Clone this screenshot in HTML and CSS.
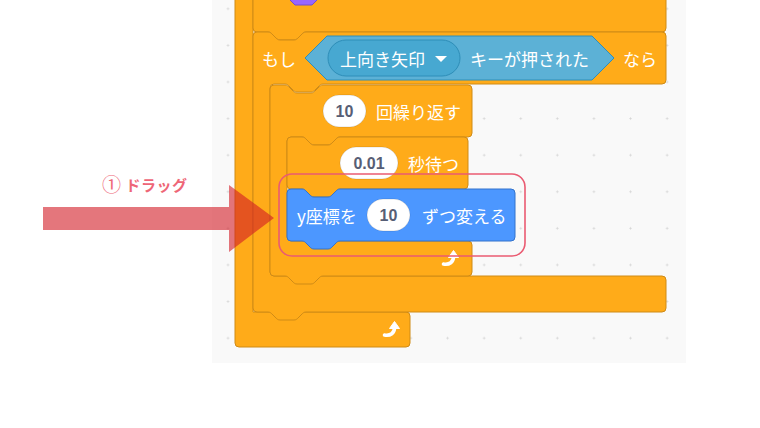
FILE: index.html
```html
<!DOCTYPE html>
<html lang="ja">
<head>
<meta charset="UTF-8" />
<meta name="viewport" content="width=device-width, initial-scale=1" />
<title>ドラッグ</title>
<link rel="stylesheet" href="styles.css">
</head>
<body>

<div class="stage">
  <div class="workspace">
    <svg class="blocks" width="474" height="363" viewBox="212 0 474 363">
      <!-- ずっと (外側) -->
      <path class="control" d="M235 -20 H253 V312 H406 a4 4 0 0 1 4 4 V343 a4 4 0 0 1 -4 4 H239 a4 4 0 0 1 -4 -4 Z" />

      <!-- 上のブロック -->
      <path class="control" d="M253 -20 H666 V28 a4 4 0 0 1 -4 4 H306 c-2 0 -3 1 -4 2 l-4 4 c-1 1 -2 2 -4 2 h-14 c-2 0 -3 -1 -4 -2 l-4 -4 c-1 -1 -2 -2 -4 -2 H257 a4 4 0 0 1 -4 -4 Z" />
      <polygon class="looks" points="273,-17 295,-39 312,-39 334,-17 312,5 295,5" />

      <!-- もし ... なら -->
      <path class="control" d="M253 36 a4 4 0 0 1 4 -4 H268 c2 0 3 1 4 2 l4 4 c1 1 2 2 4 2 h14 c2 0 3 -1 4 -2 l4 -4 c1 -1 2 -2 4 -2 H662 a4 4 0 0 1 4 4 V80 a4 4 0 0 1 -4 4 H323 c-2 0 -3 1 -4 2 l-4 4 c-1 1 -2 2 -4 2 h-14 c-2 0 -3 -1 -4 -2 l-4 -4 c-1 -1 -2 -2 -4 -2 H274 a4 4 0 0 0 -4 4 V272 a4 4 0 0 0 4 4 H662 a4 4 0 0 1 4 4 V308 a4 4 0 0 1 -4 4 H306 c-2 0 -3 1 -4 2 l-4 4 c-1 1 -2 2 -4 2 h-14 c-2 0 -3 -1 -4 -2 l-4 -4 c-1 -1 -2 -2 -4 -2 H257 a4 4 0 0 1 -4 -4 Z" />
      <text class="label" x="262" y="58">もし</text>
      <polygon class="sensing" points="305,58 327,36 592,36 614,58 592,80 327,80" />
      <rect class="sensing-menu" x="328" y="40" width="132" height="36" rx="18" />
      <text class="label" x="340" y="58">上向き矢印</text>
      <polygon class="caret" points="435,56 447,56 441,62" />
      <text class="label" x="470" y="58">キーが押された</text>
      <text class="label" x="623" y="58">なら</text>

      <!-- 10 回繰り返す -->
      <path class="control" d="M270 89 a4 4 0 0 1 4 -4 H285 c2 0 3 1 4 2 l4 4 c1 1 2 2 4 2 h14 c2 0 3 -1 4 -2 l4 -4 c1 -1 2 -2 4 -2 H468 a4 4 0 0 1 4 4 V133 a4 4 0 0 1 -4 4 H340 c-2 0 -3 1 -4 2 l-4 4 c-1 1 -2 2 -4 2 h-14 c-2 0 -3 -1 -4 -2 l-4 -4 c-1 -1 -2 -2 -4 -2 H291 a4 4 0 0 0 -4 4 V237 a4 4 0 0 0 4 4 H468 a4 4 0 0 1 4 4 V272 a4 4 0 0 1 -4 4 H323 c-2 0 -3 1 -4 2 l-4 4 c-1 1 -2 2 -4 2 h-14 c-2 0 -3 -1 -4 -2 l-4 -4 c-1 -1 -2 -2 -4 -2 H274 a4 4 0 0 1 -4 -4 Z" />
      <rect class="field" x="323" y="95" width="43" height="32" rx="16" />
      <text class="num" x="344.5" y="111">10</text>
      <text class="label" x="376" y="111">回繰り返す</text>

      <!-- 0.01 秒待つ -->
      <path class="control" d="M287 141 a4 4 0 0 1 4 -4 H302 c2 0 3 1 4 2 l4 4 c1 1 2 2 4 2 h14 c2 0 3 -1 4 -2 l4 -4 c1 -1 2 -2 4 -2 H464 a4 4 0 0 1 4 4 V185 a4 4 0 0 1 -4 4 H340 c-2 0 -3 1 -4 2 l-4 4 c-1 1 -2 2 -4 2 h-14 c-2 0 -3 -1 -4 -2 l-4 -4 c-1 -1 -2 -2 -4 -2 H291 a4 4 0 0 1 -4 -4 Z" />
      <rect class="field" x="340" y="147" width="58" height="32" rx="16" />
      <text class="num" x="369" y="163">0.01</text>
      <text class="label" x="408" y="163">秒待つ</text>

      <!-- y座標を 10 ずつ変える -->
      <path class="motion" d="M287 193 a4 4 0 0 1 4 -4 H302 c2 0 3 1 4 2 l4 4 c1 1 2 2 4 2 h14 c2 0 3 -1 4 -2 l4 -4 c1 -1 2 -2 4 -2 H511 a4 4 0 0 1 4 4 V237 a4 4 0 0 1 -4 4 H340 c-2 0 -3 1 -4 2 l-4 4 c-1 1 -2 2 -4 2 h-14 c-2 0 -3 -1 -4 -2 l-4 -4 c-1 -1 -2 -2 -4 -2 H291 a4 4 0 0 1 -4 -4 Z" />
      <text class="label" x="297" y="215">y座標を</text>
      <rect class="field" x="367" y="199" width="43" height="32" rx="16" />
      <text class="num" x="388.5" y="215">10</text>
      <text class="label" x="422" y="215">ずつ変える</text>

      <!-- 繰り返しの矢印 -->
      <g transform="translate(441 249)">
        <path class="loop-line" d="M2.5 15 C8.5 16 12.5 13 12.5 7.5" />
        <path class="loop-head" d="M7.5 8.5 L12.5 1.5 L17.5 8.5 Z" />
      </g>
      <g transform="translate(382 320)">
        <path class="loop-line" d="M2.5 15 C8.5 16 12.5 13 12.5 7.5" />
        <path class="loop-head" d="M7.5 8.5 L12.5 1.5 L17.5 8.5 Z" />
      </g>

      <rect class="highlight" x="279" y="174" width="246" height="82" rx="13" />
    </svg>
  </div>

  <div class="note"><span class="note-num">①</span> ドラッグ</div>
  <svg class="drag-arrow" width="280" height="260" viewBox="0 0 280 260">
    <path d="M43 207 H229 V185 L274 218 L229 252 V230 H43 Z" />
  </svg>
</div>

</body>
</html>
```

FILE: styles.css
```css
body {
  margin: 0;
  background: #fff;
  font-family: "Noto Sans CJK JP", "Noto Sans", sans-serif;
}
.stage {
  position: relative;
  width: 760px;
  height: 428px;
  overflow: hidden;
}
.workspace {
  margin-left: 212px;
  width: 474px;
  height: 363px;
  background-color: #f9f9f9;
  background-image: radial-gradient(circle, #d6d6d6 0.8px, transparent 1.3px);
  background-size: 36.6px 36.6px;
  background-position: -2.3px -9.5px;
}
.blocks {
  display: block;
  overflow: hidden;
}
.control {
  fill: #ffab19;
  stroke: #cf8b17;
  stroke-width: 1;
}
.motion {
  fill: #4c97ff;
  stroke: #3373cc;
  stroke-width: 1;
}
.looks {
  fill: #9966ff;
  stroke: #774dcb;
}
.sensing {
  fill: #5cb1d6;
  stroke: #2e8eb8;
}
.sensing-menu {
  fill: #47a8d1;
  stroke: #2e8eb8;
}
.caret {
  fill: #fff;
}
.label {
  font-family: "Noto Sans CJK JP", sans-serif;
  font-size: 17px;
  fill: #fff;
  dominant-baseline: central;
}
.field {
  fill: #fff;
  stroke: rgba(0,0,0,0.12);
}
.num {
  font-family: "Liberation Sans", Arial, sans-serif;
  font-weight: bold;
  font-size: 16px;
  fill: #575e75;
  text-anchor: middle;
  dominant-baseline: central;
}
.loop-line {
  fill: none;
  stroke: #fff;
  stroke-width: 3.6;
  stroke-linecap: round;
}
.loop-head {
  fill: #fff;
  stroke: #fff;
  stroke-linejoin: round;
}
.highlight {
  fill: none;
  stroke: #ea5b72;
  stroke-width: 1.6;
}
.note {
  position: absolute;
  left: 102px;
  top: 174px;
  font-size: 15px;
  font-weight: bold;
  color: #ee6677;
  line-height: 20px;
  letter-spacing: 0.5px;
}
.note-num {
  font-weight: normal;
  font-size: 19px;
  vertical-align: -1px;
}
.drag-arrow {
  position: absolute;
  left: 0;
  top: 0;
}
.drag-arrow path {
  fill: rgba(210, 27, 37, 0.6);
}
```
